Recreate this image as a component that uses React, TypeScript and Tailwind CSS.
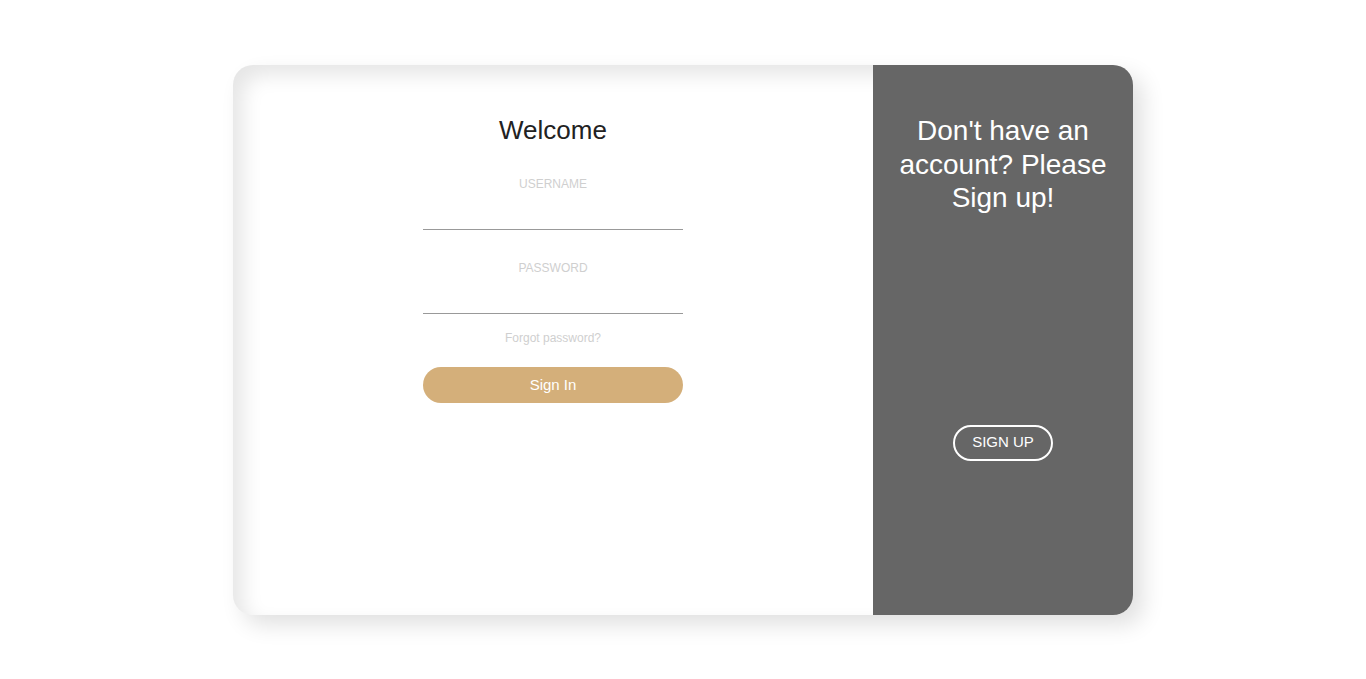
import React from 'react';

const font = { fontFamily: '"Liberation Sans", Arial, sans-serif' };

function Field({ label, type }: { label: string; type: string }) {
  return (
    <label className="block w-[260px]">
      <span className="block text-center text-[12px] uppercase leading-[14px] text-[#cfcfcf]">{label}</span>
      <input
        type={type}
        className="mt-[5px] block h-[34px] w-full border-b border-[#999] bg-transparent text-[16px] text-[#222] outline-none"
      />
    </label>
  );
}

export default function App() {
  return (
    <div className="flex min-h-[679px] w-full justify-center bg-white pt-[65px]" style={font}>
      <div className="flex h-[550px] w-[900px] overflow-hidden rounded-[20px] bg-white shadow-[inset_10px_10px_20px_rgba(0,0,0,0.1),10px_10px_22px_rgba(0,0,0,0.12)]">
        {/* Sign in form */}
        <div className="flex w-[640px] flex-col items-center pt-[50px]">
          <h2 className="text-[26px] leading-[30px] text-[#222]">Welcome</h2>
          <div className="mt-[32px]">
            <Field label="Username" type="text" />
          </div>
          <div className="mt-[31px]">
            <Field label="Password" type="password" />
          </div>
          <p className="mt-[17px] text-[12px] leading-[14px] text-[#cfcfcf]">Forgot password?</p>
          <button className="mt-[22px] h-[36px] w-[260px] rounded-full bg-[#d4af7a] text-[15px] text-white">
            Sign In
          </button>
        </div>

        {/* Sign up side */}
        <div className="flex w-[260px] flex-col items-center bg-[#666] px-[20px] pt-[49px]">
          <h2 className="text-center text-[28px] leading-[33.5px] text-white">
            Don't have an account? Please Sign up!
          </h2>
          <button className="mt-[210px] h-[36px] w-[100px] rounded-full border-2 border-white text-[15px] uppercase text-white">
            Sign Up
          </button>
        </div>
      </div>
    </div>
  );
}
